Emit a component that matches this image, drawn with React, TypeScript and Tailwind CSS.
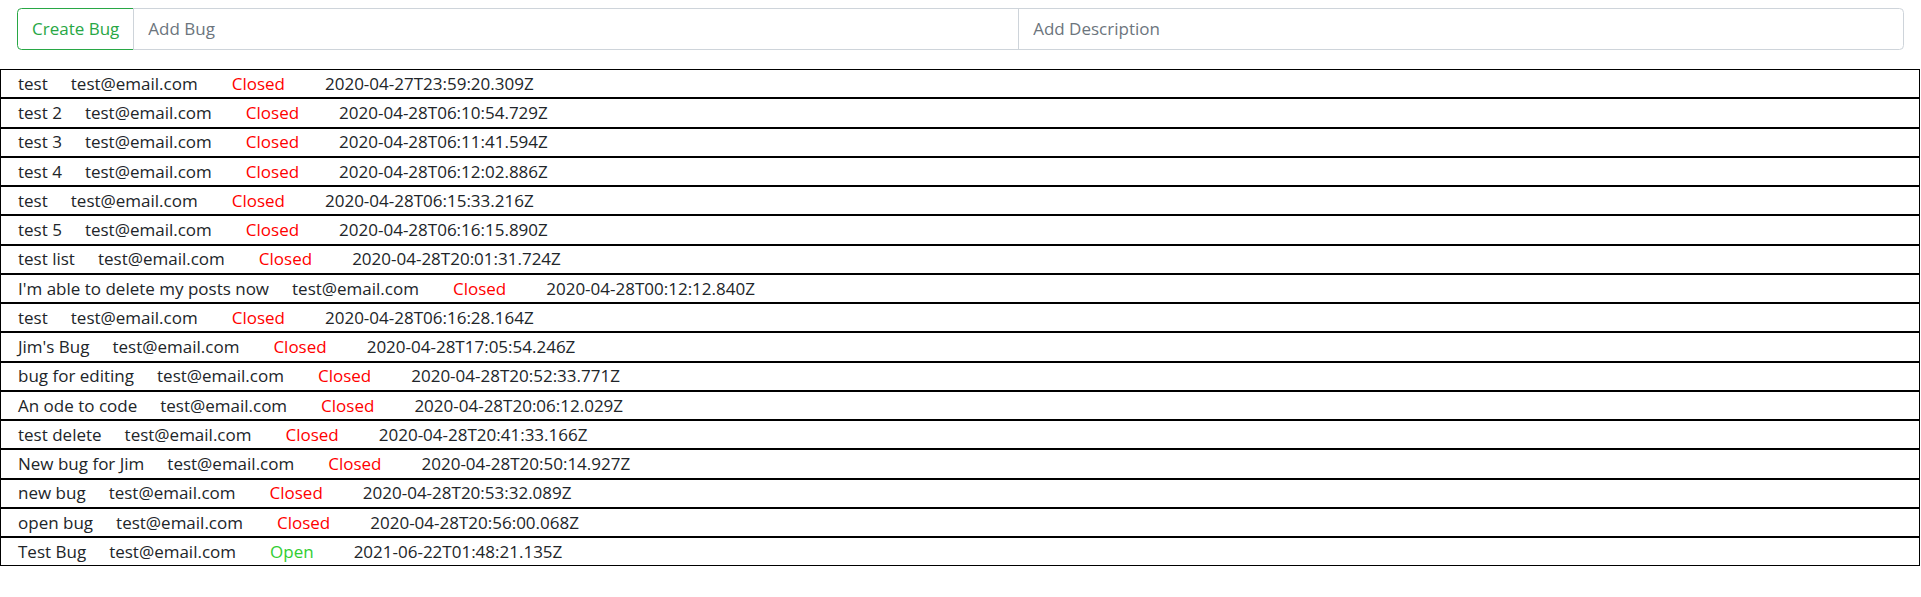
const bugs: [string, string, string, string][] = [
  ["test", "test@email.com", "Closed", "2020-04-27T23:59:20.309Z"],
  ["test 2", "test@email.com", "Closed", "2020-04-28T06:10:54.729Z"],
  ["test 3", "test@email.com", "Closed", "2020-04-28T06:11:41.594Z"],
  ["test 4", "test@email.com", "Closed", "2020-04-28T06:12:02.886Z"],
  ["test", "test@email.com", "Closed", "2020-04-28T06:15:33.216Z"],
  ["test 5", "test@email.com", "Closed", "2020-04-28T06:16:15.890Z"],
  ["test list", "test@email.com", "Closed", "2020-04-28T20:01:31.724Z"],
  ["I'm able to delete my posts now", "test@email.com", "Closed", "2020-04-28T00:12:12.840Z"],
  ["test", "test@email.com", "Closed", "2020-04-28T06:16:28.164Z"],
  ["Jim's Bug", "test@email.com", "Closed", "2020-04-28T17:05:54.246Z"],
  ["bug for editing", "test@email.com", "Closed", "2020-04-28T20:52:33.771Z"],
  ["An ode to code", "test@email.com", "Closed", "2020-04-28T20:06:12.029Z"],
  ["test delete", "test@email.com", "Closed", "2020-04-28T20:41:33.166Z"],
  ["New bug for Jim", "test@email.com", "Closed", "2020-04-28T20:50:14.927Z"],
  ["new bug", "test@email.com", "Closed", "2020-04-28T20:53:32.089Z"],
  ["open bug", "test@email.com", "Closed", "2020-04-28T20:56:00.068Z"],
  ["Test Bug", "test@email.com", "Open", "2021-06-22T01:48:21.135Z"],
];

function BugRow({ bug }: { bug: [string, string, string, string] }) {
  const [title, email, status, created] = bug;
  return (
    <div className="flex items-center h-[29.25px] border border-black px-[17px] whitespace-nowrap">
      <span>{title}</span>
      <span className="ml-[23px]">{email}</span>
      <span
        className={
          status === "Open"
            ? "ml-[34px] text-[#32cd32]"
            : "ml-[34px] text-[#ff0000]"
        }
      >
        {status}
      </span>
      <span className="ml-[40px]">{created}</span>
    </div>
  );
}

export default function App() {
  return (
    <div className="min-h-[597px] bg-white text-[#212529] text-[17px] font-['Open_Sans',sans-serif]">
      <div className="px-[17px] pt-[8px]">
        <div className="flex h-[42px]">
          <button className="px-[14px] border border-[#28a745] text-[#28a745] rounded-l-[4.5px] bg-white">
            Create Bug
          </button>
          <input
            placeholder="Add Bug"
            className="flex-1 min-w-0 -ml-px px-[14px] border border-[#ced4da] placeholder:text-[#6c757d] outline-none"
          />
          <input
            placeholder="Add Description"
            className="flex-1 min-w-0 -ml-px px-[14px] border border-[#ced4da] rounded-r-[4.5px] placeholder:text-[#6c757d] outline-none"
          />
        </div>
      </div>
      <div className="mt-[19px] w-[1920px]">
        {bugs.map((bug, i) => (
          <BugRow key={i} bug={bug} />
        ))}
      </div>
    </div>
  );
}
